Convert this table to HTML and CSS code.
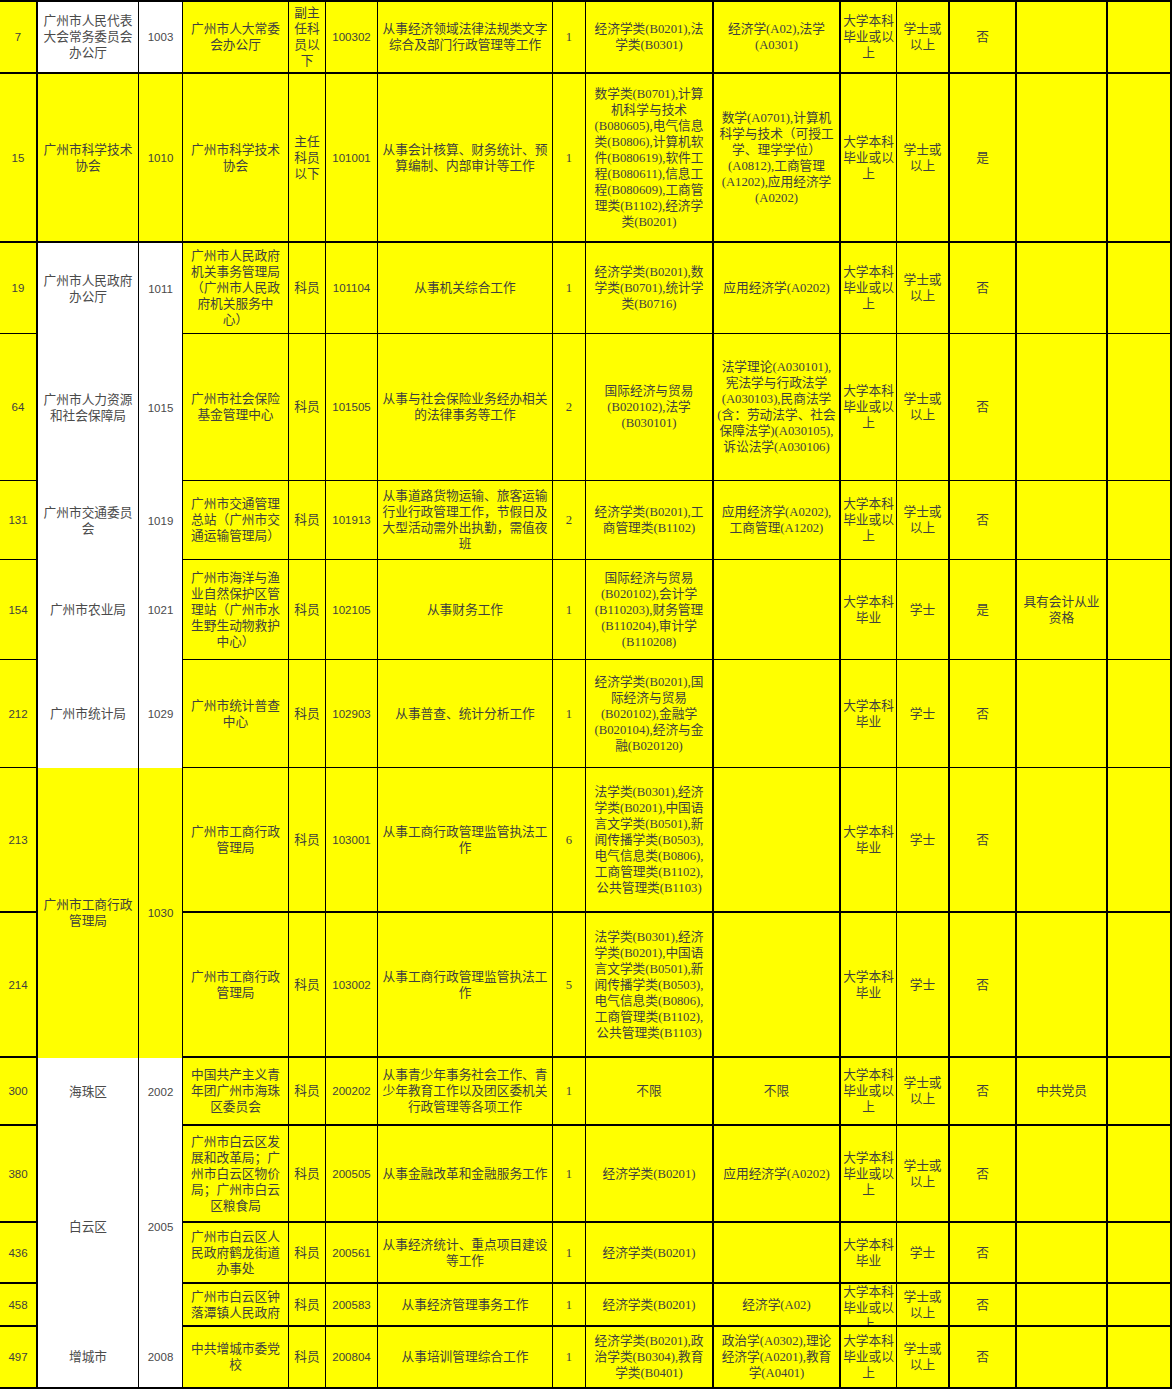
FILE: index.html
```html
<!DOCTYPE html>
<html lang="zh-CN">
<head>
<meta charset="utf-8">
<title>职位表</title>
<link rel="stylesheet" href="styles.css">
</head>
<body>
<div class="sheet">

  <div class="row thick">
    <div class="c n k">7</div>
    <div class="c w">广州市人民代表<br>大会常务委员会<br>办公厅</div>
    <div class="c n w">1003</div>
    <div class="c">广州市人大常委<br>会办公厅</div>
    <div class="c">副主<br>任科<br>员以<br>下</div>
    <div class="c n">100302</div>
    <div class="c">从事经济领域法律法规类文字<br>综合及部门行政管理等工作</div>
    <div class="c">1</div>
    <div class="c k">经济学类(B0201),法<br>学类(B0301)</div>
    <div class="c k">经济学(A02),法学<br>(A0301)</div>
    <div class="c">大学本科<br>毕业或以<br>上</div>
    <div class="c k">学士或<br>以上</div>
    <div class="c k">否</div>
    <div class="c k"></div>
    <div class="c k"></div>
  </div>

  <div class="row thick">
    <div class="c n k">15</div>
    <div class="c">广州市科学技术<br>协会</div>
    <div class="c n">1010</div>
    <div class="c">广州市科学技术<br>协会</div>
    <div class="c">主任<br>科员<br>以下</div>
    <div class="c n">101001</div>
    <div class="c">从事会计核算、财务统计、预<br>算编制、内部审计等工作</div>
    <div class="c">1</div>
    <div class="c k">数学类(B0701),计算<br>机科学与技术<br>(B080605),电气信息<br>类(B0806),计算机软<br>件(B080619),软件工<br>程(B080611),信息工<br>程(B080609),工商管<br>理类(B1102),经济学<br>类(B0201)</div>
    <div class="c k">数学(A0701),计算机<br>科学与技术（可授工<br>学、理学学位）<br>(A0812),工商管理<br>(A1202),应用经济学<br>(A0202)</div>
    <div class="c">大学本科<br>毕业或以<br>上</div>
    <div class="c k">学士或<br>以上</div>
    <div class="c k">是</div>
    <div class="c k"></div>
    <div class="c k"></div>
  </div>

  <div class="row">
    <div class="c n k">19</div>
    <div class="c w o">广州市人民政府<br>办公厅</div>
    <div class="c n w o">1011</div>
    <div class="c">广州市人民政府<br>机关事务管理局<br>（广州市人民政<br>府机关服务中<br>心）</div>
    <div class="c">科员</div>
    <div class="c n">101104</div>
    <div class="c">从事机关综合工作</div>
    <div class="c">1</div>
    <div class="c k">经济学类(B0201),数<br>学类(B0701),统计学<br>类(B0716)</div>
    <div class="c k">应用经济学(A0202)</div>
    <div class="c">大学本科<br>毕业或以<br>上</div>
    <div class="c k">学士或<br>以上</div>
    <div class="c k">否</div>
    <div class="c k"></div>
    <div class="c k"></div>
  </div>

  <div class="row">
    <div class="c n k">64</div>
    <div class="c w o">广州市人力资源<br>和社会保障局</div>
    <div class="c n w o">1015</div>
    <div class="c">广州市社会保险<br>基金管理中心</div>
    <div class="c">科员</div>
    <div class="c n">101505</div>
    <div class="c">从事与社会保险业务经办相关<br>的法律事务等工作</div>
    <div class="c">2</div>
    <div class="c k">国际经济与贸易<br>(B020102),法学<br>(B030101)</div>
    <div class="c k">法学理论(A030101),<br>宪法学与行政法学<br>(A030103),民商法学<br>(含：劳动法学、社会<br>保障法学)(A030105),<br>诉讼法学(A030106)</div>
    <div class="c">大学本科<br>毕业或以<br>上</div>
    <div class="c k">学士或<br>以上</div>
    <div class="c k">否</div>
    <div class="c k"></div>
    <div class="c k"></div>
  </div>

  <div class="row">
    <div class="c n k">131</div>
    <div class="c w o">广州市交通委员<br>会</div>
    <div class="c n w o">1019</div>
    <div class="c">广州市交通管理<br>总站（广州市交<br>通运输管理局）</div>
    <div class="c">科员</div>
    <div class="c n">101913</div>
    <div class="c">从事道路货物运输、旅客运输<br>行业行政管理工作，节假日及<br>大型活动需外出执勤，需值夜<br>班</div>
    <div class="c">2</div>
    <div class="c k">经济学类(B0201),工<br>商管理类(B1102)</div>
    <div class="c k">应用经济学(A0202),<br>工商管理(A1202)</div>
    <div class="c">大学本科<br>毕业或以<br>上</div>
    <div class="c k">学士或<br>以上</div>
    <div class="c k">否</div>
    <div class="c k"></div>
    <div class="c k"></div>
  </div>

  <div class="row">
    <div class="c n k">154</div>
    <div class="c w o">广州市农业局</div>
    <div class="c n w o">1021</div>
    <div class="c">广州市海洋与渔<br>业自然保护区管<br>理站（广州市水<br>生野生动物救护<br>中心）</div>
    <div class="c">科员</div>
    <div class="c n">102105</div>
    <div class="c">从事财务工作</div>
    <div class="c">1</div>
    <div class="c k">国际经济与贸易<br>(B020102),会计学<br>(B110203),财务管理<br>(B110204),审计学<br>(B110208)</div>
    <div class="c k"></div>
    <div class="c">大学本科<br>毕业</div>
    <div class="c k">学士</div>
    <div class="c k">是</div>
    <div class="c k">具有会计从业<br>资格</div>
    <div class="c k"></div>
  </div>

  <div class="row">
    <div class="c n k">212</div>
    <div class="c w o">广州市统计局</div>
    <div class="c n w o">1029</div>
    <div class="c">广州市统计普查<br>中心</div>
    <div class="c">科员</div>
    <div class="c n">102903</div>
    <div class="c">从事普查、统计分析工作</div>
    <div class="c">1</div>
    <div class="c k">经济学类(B0201),国<br>际经济与贸易<br>(B020102),金融学<br>(B020104),经济与金<br>融(B020120)</div>
    <div class="c k"></div>
    <div class="c">大学本科<br>毕业</div>
    <div class="c k">学士</div>
    <div class="c k">否</div>
    <div class="c k"></div>
    <div class="c k"></div>
  </div>

  <div class="row thick">
    <div class="c n k">213</div>
    <div class="c o s2">广州市工商行政<br>管理局</div>
    <div class="c n o s2">1030</div>
    <div class="c">广州市工商行政<br>管理局</div>
    <div class="c">科员</div>
    <div class="c n">103001</div>
    <div class="c">从事工商行政管理监管执法工<br>作</div>
    <div class="c">6</div>
    <div class="c k">法学类(B0301),经济<br>学类(B0201),中国语<br>言文学类(B0501),新<br>闻传播学类(B0503),<br>电气信息类(B0806),<br>工商管理类(B1102),<br>公共管理类(B1103)</div>
    <div class="c k"></div>
    <div class="c">大学本科<br>毕业</div>
    <div class="c k">学士</div>
    <div class="c k">否</div>
    <div class="c k"></div>
    <div class="c k"></div>
  </div>

  <div class="row thick">
    <div class="c n k">214</div>
    <div class="c">广州市工商行政<br>管理局</div>
    <div class="c">科员</div>
    <div class="c n">103002</div>
    <div class="c">从事工商行政管理监管执法工<br>作</div>
    <div class="c">5</div>
    <div class="c k">法学类(B0301),经济<br>学类(B0201),中国语<br>言文学类(B0501),新<br>闻传播学类(B0503),<br>电气信息类(B0806),<br>工商管理类(B1102),<br>公共管理类(B1103)</div>
    <div class="c k"></div>
    <div class="c">大学本科<br>毕业</div>
    <div class="c k">学士</div>
    <div class="c k">否</div>
    <div class="c k"></div>
    <div class="c k"></div>
  </div>

  <div class="row thick">
    <div class="c n k">300</div>
    <div class="c w o">海珠区</div>
    <div class="c n w o">2002</div>
    <div class="c">中国共产主义青<br>年团广州市海珠<br>区委员会</div>
    <div class="c">科员</div>
    <div class="c n">200202</div>
    <div class="c">从事青少年事务社会工作、青<br>少年教育工作以及团区委机关<br>行政管理等各项工作</div>
    <div class="c">1</div>
    <div class="c k">不限</div>
    <div class="c k">不限</div>
    <div class="c">大学本科<br>毕业或以<br>上</div>
    <div class="c k">学士或<br>以上</div>
    <div class="c k">否</div>
    <div class="c k">中共党员</div>
    <div class="c k"></div>
  </div>

  <div class="row thick">
    <div class="c n k">380</div>
    <div class="c w o s3">白云区</div>
    <div class="c n w o s3">2005</div>
    <div class="c">广州市白云区发<br>展和改革局；广<br>州市白云区物价<br>局；广州市白云<br>区粮食局</div>
    <div class="c">科员</div>
    <div class="c n">200505</div>
    <div class="c">从事金融改革和金融服务工作</div>
    <div class="c">1</div>
    <div class="c k">经济学类(B0201)</div>
    <div class="c k">应用经济学(A0202)</div>
    <div class="c">大学本科<br>毕业或以<br>上</div>
    <div class="c k">学士或<br>以上</div>
    <div class="c k">否</div>
    <div class="c k"></div>
    <div class="c k"></div>
  </div>

  <div class="row thick">
    <div class="c n k">436</div>
    <div class="c">广州市白云区人<br>民政府鹤龙街道<br>办事处</div>
    <div class="c">科员</div>
    <div class="c n">200561</div>
    <div class="c">从事经济统计、重点项目建设<br>等工作</div>
    <div class="c">1</div>
    <div class="c k">经济学类(B0201)</div>
    <div class="c k"></div>
    <div class="c">大学本科<br>毕业</div>
    <div class="c k">学士</div>
    <div class="c k">否</div>
    <div class="c k"></div>
    <div class="c k"></div>
  </div>

  <div class="row thick">
    <div class="c n k">458</div>
    <div class="c">广州市白云区钟<br>落潭镇人民政府</div>
    <div class="c">科员</div>
    <div class="c n">200583</div>
    <div class="c">从事经济管理事务工作</div>
    <div class="c">1</div>
    <div class="c k">经济学类(B0201)</div>
    <div class="c k">经济学(A02)</div>
    <div class="c top">大学本科<br>毕业或以<br>上</div>
    <div class="c k">学士或<br>以上</div>
    <div class="c k">否</div>
    <div class="c k"></div>
    <div class="c k"></div>
  </div>

  <div class="row thick">
    <div class="c n k">497</div>
    <div class="c w">增城市</div>
    <div class="c n w">2008</div>
    <div class="c">中共增城市委党<br>校</div>
    <div class="c">科员</div>
    <div class="c n">200804</div>
    <div class="c">从事培训管理综合工作</div>
    <div class="c">1</div>
    <div class="c k">经济学类(B0201),政<br>治学类(B0304),教育<br>学类(B0401)</div>
    <div class="c k">政治学(A0302),理论<br>经济学(A0201),教育<br>学(A0401)</div>
    <div class="c">大学本科<br>毕业或以<br>上</div>
    <div class="c k">学士或<br>以上</div>
    <div class="c k">否</div>
    <div class="c k"></div>
    <div class="c k"></div>
  </div>

</div>
</body>
</html>
```

FILE: styles.css
```css
* {
  box-sizing: border-box;
}

body {
  margin: 0;
  background: #ffffff;
}

.sheet {
  display: grid;
  width: 1172px;
  grid-template-columns: 38px 101px 44px 106px 37px 52px 175px 33px 128px 127px 56px 53px 67px 91px 64px;
  grid-template-rows: 72px 169px 91px 147px 79px 100px 108px 145px 145px 68px 97px 61px 43px 62px;
  border-top: 2px solid #000;
}

.row {
  display: contents;
}

.c {
  display: flex;
  align-items: center;
  justify-content: center;
  text-align: center;
  white-space: nowrap;
  overflow: hidden;
  background: #ffff00;
  border-right: 1px solid #000;
  border-bottom: 1px solid #000;
  font-family: "Liberation Serif", "Noto Sans CJK SC", serif;
  font-size: 12.7px;
  line-height: 16px;
  color: #3f3f3f;
}

.n {
  font-family: "Liberation Sans", "Noto Sans CJK SC", sans-serif;
  font-size: 11.5px;
}

.w {
  background: #ffffff;
  color: #4a4a4a;
}

.k {
  border-right-width: 2px;
}

.thick > .c {
  border-bottom-width: 2px;
}

.row > .c.o {
  border-bottom: 0;
}

.s2 {
  grid-row: span 2;
}

.s3 {
  grid-row: span 3;
}

.top {
  align-items: flex-start;
}
```
